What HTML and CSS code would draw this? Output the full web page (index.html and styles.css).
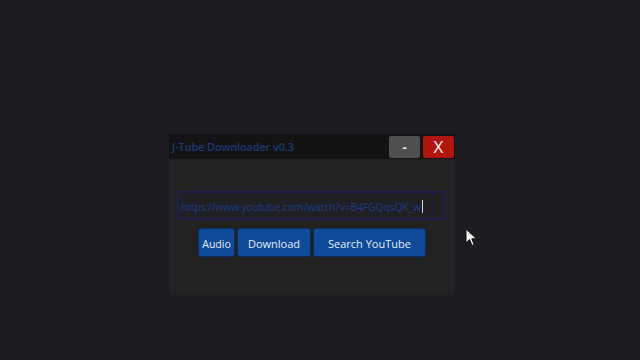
FILE: index.html
```html
<!DOCTYPE html>
<html>
<head>
<meta charset="utf-8">
<link rel="stylesheet" href="styles.css">
</head>
<body>
<div class="desktop">
  <div class="shadow"></div>
  <div class="window">
    <div class="titlebar">
      <span class="title">J-Tube Downloader v0.3</span>
      <div class="controls">
        <button class="ctl min">-</button>
        <button class="ctl close">X</button>
      </div>
    </div>
    <div class="content">
      <div class="url">https://www.youtube.com/watch?v=B4FGQqsQK_w<span class="caret"></span></div>
      <div class="actions">
        <button class="btn audio">Audio</button>
        <button class="btn dl">Download</button>
        <button class="btn search">Search YouTube</button>
      </div>
    </div>
  </div>
  <svg class="pointer" width="13" height="19" viewBox="0 0 13 19">
    <path d="M1 1 L1 15 L4.5 11.5 L7 17.5 L9.2 16.6 L6.8 10.8 L11.5 10.8 Z" fill="#f2f2f2" stroke="#111" stroke-width="1"/>
  </svg>
</div>
</body>
</html>
```
FILE: styles.css
```css
* { box-sizing: border-box; }
html, body { margin: 0; padding: 0; }
body {
  width: 640px;
  height: 360px;
  background: #1b1c20;
  font-family: "Open Sans", "Noto Sans", sans-serif;
  overflow: hidden;
}
.desktop {
  position: relative;
  width: 640px;
  height: 360px;
  padding: 134px 0 0 169px;
}
.shadow {
  position: absolute;
  left: 100px;
  top: 116px;
  width: 440px;
  height: 186px;
  background: #1c1d21;
  border-radius: 6px;
}
.window {
  position: relative;
  width: 286px;
  height: 161px;
  background: #222223;
  display: flex;
  flex-direction: column;
}
.titlebar {
  height: 25px;
  background: #131314;
  display: flex;
  align-items: center;
  justify-content: space-between;
  padding: 0 1px 0 3px;
}
.title {
  color: #1c3a78;
  font-size: 10.8px;
  font-weight: 600;
  letter-spacing: -0.05px;
}
.controls {
  display: flex;
  gap: 3px;
  height: 22px;
}
.ctl {
  width: 31px;
  height: 22px;
  border: none;
  border-radius: 2px;
  color: #f0f0f0;
  font-family: "Open Sans", sans-serif;
  padding: 0;
  line-height: 22px;
}
.min { background: #4e4f51; font-weight: 700; font-size: 13px; }
.close { background: #b11510; font-size: 17px; }
.content {
  flex: 1;
  display: flex;
  flex-direction: column;
  align-items: flex-start;
  padding: 32px 0 0 9px;
}
.url {
  width: 267px;
  height: 29px;
  border: 2px solid #1d1b52;
  background: #202024;
  color: #1d3d86;
  font-size: 10.4px;
  letter-spacing: -0.15px;
  padding: 2px 0 0 1px;
  white-space: nowrap;
  display: flex;
  align-items: center;
}
.caret {
  display: inline-block;
  width: 1px;
  height: 13px;
  background: #d8d8d8;
  margin-left: 1px;
}
.actions {
  display: flex;
  gap: 2px;
  margin: 8px 0 0 20px;
}
.btn {
  height: 29px;
  background: #0f4b98;
  border: 1px solid #0b2e60;
  border-radius: 3px;
  color: #e4ebf5;
  font-family: "Open Sans", sans-serif;
  font-size: 11px;
  padding: 2px 0 0 0;
}
.audio { width: 37px; font-size: 10.5px; }
.dl { width: 74px; }
.search { width: 113px; }
.pointer {
  position: absolute;
  left: 465px;
  top: 228px;
}
```
